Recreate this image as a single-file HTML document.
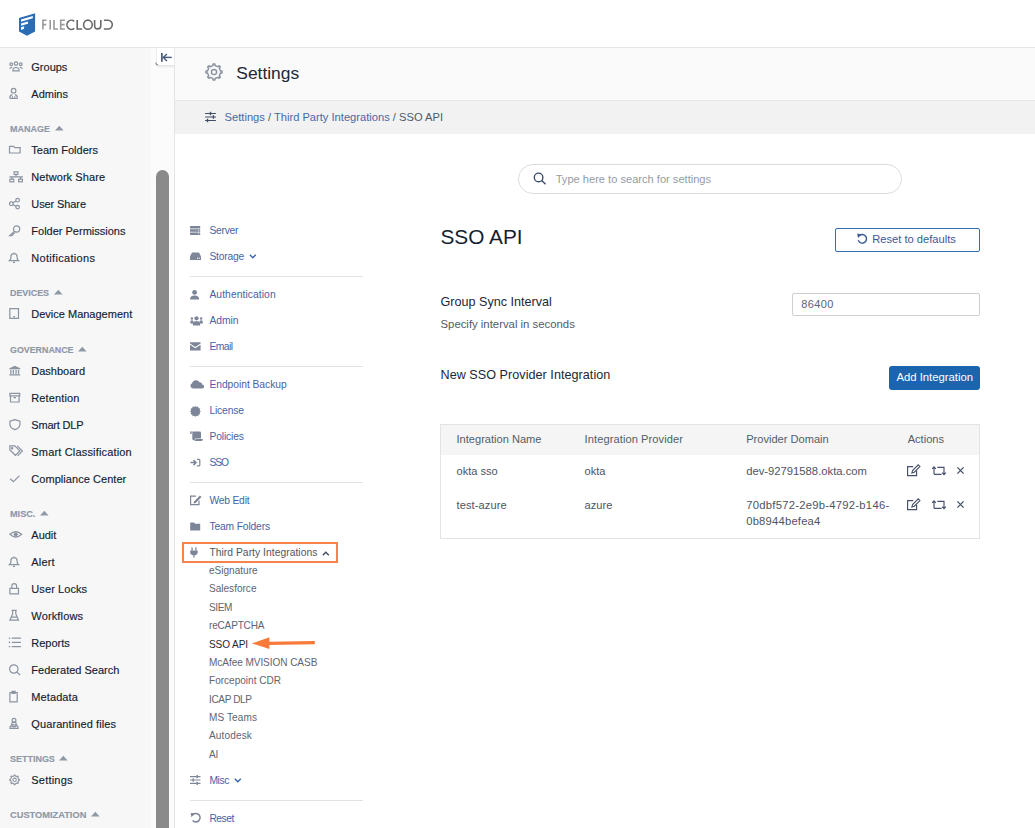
<!DOCTYPE html>
<html><head><meta charset="utf-8"><style>
html,body{margin:0;padding:0;width:1035px;height:828px;overflow:hidden;background:#fff;font-family:"Liberation Sans", sans-serif}
.t{position:absolute;white-space:nowrap;line-height:1}
svg{overflow:visible}
</style></head><body>
<div style="position:absolute;left:0px;top:0px;width:1035px;height:47px;background:#fff"></div><div style="position:absolute;left:0px;top:47px;width:1035px;height:1px;background:#e6e6e6"></div><div style="position:absolute;left:0px;top:48px;width:151px;height:780px;background:#f7f7f7"></div><div style="position:absolute;left:151px;top:48px;width:23px;height:780px;background:#fbfbfb"></div><div style="position:absolute;left:174px;top:48px;width:1px;height:780px;background:#e4e4e4"></div><div style="position:absolute;left:175px;top:48px;width:860px;height:52px;background:#fafafa"></div><div style="position:absolute;left:175px;top:100px;width:860px;height:1px;background:#e6e6e6"></div><div style="position:absolute;left:175px;top:101px;width:860px;height:33px;background:#f2f2f2"></div><div style="position:absolute;left:175px;top:134px;width:860px;height:694px;background:#fff"></div><div style="position:absolute;left:156px;top:170px;width:13px;height:700px;background:#8a8a8a;border-radius:6.5px"></div><svg style="position:absolute;left:17px;top:11px;" width="22" height="28" viewBox="0 0 22 28">
<path d="M2 7 L18.1 2.2 L18.1 20.4 L10 24.8 L2 20.4 Z" fill="#2b6db4"/>
<path d="M4 8.6 L15.8 5 L15.8 7.2 L4 10.8 Z" fill="#fff"/>
<path d="M4 12.6 L11 10.5 L11 12.7 L4 14.8 Z" fill="#fff"/>
<path d="M4 16.3 L7.1 15.2 L7.1 17.8 L4 19 Z" fill="#fff"/>
</svg><svg style="position:absolute;left:38px;top:14px;" width="80" height="20" viewBox="0 0 80 20">
<g fill="none" stroke-width="1.6">
<g stroke="#9a9a9a">
<path d="M4.9 15.6 V6.2 H8.6 M4.9 10.6 H8.2"/>
<path d="M12.2 6 V15.6"/>
<path d="M16 6 V15 H20"/>
<path d="M26.9 6.2 H22.7 V15 H26.9 M22.7 10.6 H26.6"/>
</g>
<g stroke="#6a6a6a">
<path d="M36.2 7.3 A4.4 4.6 0 1 0 36.2 14.3"/>
<path d="M39.2 6 V15 H44.2"/>
<ellipse cx="49.9" cy="10.7" rx="4.3" ry="4.6"/>
<path d="M56.6 6 V11.5 A3.1 3.4 0 0 0 62.8 11.5 V6"/>
<path d="M65.9 6.2 H70 A4.3 4.4 0 0 1 70 15 H65.9"/>
</g>
</g>
</svg><div style="position:absolute;left:156px;top:48px;width:19px;height:18px;box-sizing:border-box;background:#fff;border-left:1px solid #ececec;border-right:1px solid #e9e9e9;border-bottom:1px solid #e6e6e6;box-shadow:0 2px 2px -1px rgba(0,0,0,0.08)"></div><svg style="position:absolute;left:154px;top:61px;" width="6" height="6" viewBox="0 0 6 6"><path d="M1.6 1.6 Q1.8 3.6 4.2 4" stroke="#6a6a6a" stroke-width="1.1" fill="none" opacity="0.75"/></svg><svg style="position:absolute;left:158px;top:50px;" width="16" height="14" viewBox="0 0 16 14"><g fill="none" stroke="#46587a"><path d="M3.9 2.9 V11.8" stroke-width="1.7"/><path d="M5.2 7.4 H13.7" stroke-width="1.4"/><path d="M8.9 3.9 L5.4 7.4 L8.9 10.9" stroke-width="1.4"/></g></svg><div class="t" style="left:31.3px;top:62.00px;font-size:11px;color:#131c33;font-weight:400;-webkit-text-stroke:0.15px #131c33;letter-spacing:0px">Groups</div><svg style="position:absolute;left:8px;top:60.2px;" width="16" height="14" viewBox="0 0 16 14"><g fill="none" stroke="#8b94a1" stroke-width="1.2"><circle cx="3.2" cy="4.2" r="1.35"/><circle cx="8" cy="3.6" r="1.75"/><circle cx="12.8" cy="4.2" r="1.35"/><path d="M1.6 8.7 Q2.4 7.3 4.3 7.3 M14.5 8.7 Q13.7 7.3 11.8 7.3"/><path d="M4.9 10.9 Q4.9 7.5 8 7.5 Q11.1 7.5 11.1 10.9 Z"/></g></svg><div class="t" style="left:31.3px;top:89.00px;font-size:11px;color:#131c33;font-weight:400;-webkit-text-stroke:0.15px #131c33;letter-spacing:0px">Admins</div><svg style="position:absolute;left:8px;top:87.2px;" width="16" height="14" viewBox="0 0 16 14"><g fill="none" stroke="#8b94a1" stroke-width="1.2"><circle cx="5.6" cy="3.7" r="2.3"/><path d="M1.8 11.4 Q1.8 7.9 4.3 7.6 M9.4 11.4 Q9.4 7.9 6.9 7.6 M1.8 11.5 H9.4 M4.4 11.4 V9.2 M6.8 11.4 V9.2"/></g></svg><div class="t" style="left:9.5px;top:124px;font-size:9.7px;color:#8f98a6;font-weight:700;transform:scaleX(0.926);transform-origin:0 0;-webkit-text-stroke:0.15px #8f98a6">MANAGE</div><svg style="position:absolute;left:54.5px;top:125px;" width="9" height="6" viewBox="0 0 9 6"><path d="M0 5.5 L4.3 0.7 L8.6 5.5 Z" fill="#8f98a6"/></svg><div class="t" style="left:31.3px;top:145.00px;font-size:11px;color:#131c33;font-weight:400;-webkit-text-stroke:0.15px #131c33;letter-spacing:0px">Team Folders</div><svg style="position:absolute;left:8px;top:143.2px;" width="16" height="14" viewBox="0 0 16 14"><g fill="none" stroke="#8b94a1" stroke-width="1.2"><path d="M1.5 3.4 H5.6 L6.8 4.6 H12.1 V10 H1.5 Z"/></g></svg><div class="t" style="left:31.3px;top:172.00px;font-size:11px;color:#131c33;font-weight:400;-webkit-text-stroke:0.15px #131c33;letter-spacing:0.08px">Network Share</div><svg style="position:absolute;left:8px;top:170.2px;" width="16" height="14" viewBox="0 0 16 14"><g fill="none" stroke="#8b94a1" stroke-width="1.2"><rect x="6.1" y="1.8" width="3.8" height="2.6"/><rect x="1.9" y="9.2" width="3.8" height="2.6"/><rect x="10.6" y="9.2" width="3.8" height="2.6"/><path d="M8 4.4 V6.8 M1.4 6.8 H15 M3.8 6.8 V9.2 M12.5 6.8 V9.2"/></g></svg><div class="t" style="left:31.3px;top:199.00px;font-size:11px;color:#131c33;font-weight:400;-webkit-text-stroke:0.15px #131c33;letter-spacing:-0.1px">User Share</div><svg style="position:absolute;left:8px;top:197.2px;" width="16" height="14" viewBox="0 0 16 14"><g fill="none" stroke="#8b94a1" stroke-width="1.2"><circle cx="3.3" cy="6.7" r="1.8"/><circle cx="9.6" cy="3.2" r="1.8"/><circle cx="9.6" cy="10.1" r="1.8"/><path d="M4.9 5.8 L8 4.1 M4.9 7.6 L8 9.2"/></g></svg><div class="t" style="left:31.3px;top:226.00px;font-size:11px;color:#131c33;font-weight:400;-webkit-text-stroke:0.15px #131c33;letter-spacing:0px">Folder Permissions</div><svg style="position:absolute;left:8px;top:224.2px;" width="16" height="14" viewBox="0 0 16 14"><g fill="none" stroke="#8b94a1" stroke-width="1.2"><path d="M6.1 7.6 L1.6 11.6 H3.9 L4.6 10.9 V9.9 H5.6 L6.9 8.6"/><circle cx="8.6" cy="5" r="3.1"/></g></svg><div class="t" style="left:31.3px;top:253.00px;font-size:11px;color:#131c33;font-weight:400;-webkit-text-stroke:0.15px #131c33;letter-spacing:0.31px">Notifications</div><svg style="position:absolute;left:8px;top:251.2px;" width="16" height="14" viewBox="0 0 16 14"><g fill="none" stroke="#8b94a1" stroke-width="1.2"><path d="M1.6 9.6 Q2.9 8.6 2.9 6.6 V5.7 A3.1 3.1 0 0 1 9.1 5.7 V6.6 Q9.1 8.6 10.4 9.6 Z M5 11.3 H7 M6 1.5 V2.5"/></g></svg><div class="t" style="left:9.5px;top:288px;font-size:9.7px;color:#8f98a6;font-weight:700;transform:scaleX(0.918);transform-origin:0 0;-webkit-text-stroke:0.15px #8f98a6">DEVICES</div><svg style="position:absolute;left:53.7px;top:289px;" width="9" height="6" viewBox="0 0 9 6"><path d="M0 5.5 L4.3 0.7 L8.6 5.5 Z" fill="#8f98a6"/></svg><div class="t" style="left:31.3px;top:309.00px;font-size:11px;color:#131c33;font-weight:400;-webkit-text-stroke:0.15px #131c33;letter-spacing:0px">Device Management</div><svg style="position:absolute;left:8px;top:307.2px;" width="16" height="14" viewBox="0 0 16 14"><g fill="none" stroke="#8b94a1" stroke-width="1.2"><path d="M1.8 1.7 H10.5 V11.3 H1.8 Z M5.3 9.7 H7"/></g></svg><div class="t" style="left:9.5px;top:345px;font-size:9.7px;color:#8f98a6;font-weight:700;transform:scaleX(0.915);transform-origin:0 0;-webkit-text-stroke:0.15px #8f98a6">GOVERNANCE</div><svg style="position:absolute;left:78px;top:346px;" width="9" height="6" viewBox="0 0 9 6"><path d="M0 5.5 L4.3 0.7 L8.6 5.5 Z" fill="#8f98a6"/></svg><div class="t" style="left:31.3px;top:366.00px;font-size:11px;color:#131c33;font-weight:400;-webkit-text-stroke:0.15px #131c33;letter-spacing:0px">Dashboard</div><svg style="position:absolute;left:8px;top:364.2px;" width="16" height="14" viewBox="0 0 16 14"><g fill="#8b94a1"><path d="M6.8 1.8 L12.2 4.3 V5.2 H1.4 V4.3 Z"/><rect x="2.2" y="5.8" width="1.3" height="4"/><rect x="4.7" y="5.8" width="1.3" height="4"/><rect x="7.4" y="5.8" width="1.3" height="4"/><rect x="9.9" y="5.8" width="1.3" height="4"/><rect x="1.4" y="10.2" width="10.8" height="1.3"/></g></svg><div class="t" style="left:31.3px;top:393.00px;font-size:11px;color:#131c33;font-weight:400;-webkit-text-stroke:0.15px #131c33;letter-spacing:0.12px">Retention</div><svg style="position:absolute;left:8px;top:391.2px;" width="16" height="14" viewBox="0 0 16 14"><g fill="none" stroke="#8b94a1" stroke-width="1.2"><path d="M1.9 2.3 H11.7 V4.8 H1.9 Z M2.5 4.8 V11 H11.1 V4.8 M5.6 6.7 H8"/></g></svg><div class="t" style="left:31.3px;top:420.00px;font-size:11px;color:#131c33;font-weight:400;-webkit-text-stroke:0.15px #131c33;letter-spacing:-0.2px">Smart DLP</div><svg style="position:absolute;left:8px;top:418.2px;" width="16" height="14" viewBox="0 0 16 14"><g fill="none" stroke="#8b94a1" stroke-width="1.2"><path d="M6.9 1.6 L11.9 3.3 V6.2 Q11.9 10 6.9 11.6 Q1.9 10 1.9 6.2 V3.3 Z"/></g></svg><div class="t" style="left:31.3px;top:447.00px;font-size:11px;color:#131c33;font-weight:400;-webkit-text-stroke:0.15px #131c33;letter-spacing:0.17px">Smart Classification</div><svg style="position:absolute;left:8px;top:445.2px;" width="16" height="14" viewBox="0 0 16 14"><g fill="none" stroke="#8b94a1" stroke-width="1.2"><path d="M1.9 0.9 H6.8 L11.8 5.9 L7.4 10.3 L1.9 4.9 Z M9.2 0.9 L14.4 6.1 L9.6 10.9"/><circle cx="4.2" cy="3.3" r="0.6"/></g></svg><div class="t" style="left:31.3px;top:474.00px;font-size:11px;color:#131c33;font-weight:400;-webkit-text-stroke:0.15px #131c33;letter-spacing:0.05px">Compliance Center</div><svg style="position:absolute;left:8px;top:472.2px;" width="16" height="14" viewBox="0 0 16 14"><g fill="none" stroke="#8b94a1" stroke-width="1.2" stroke-width="1.2"><path d="M2.2 6.8 L5.4 9.6 L11.5 3.6"/></g></svg><div class="t" style="left:9.5px;top:509px;font-size:9.7px;color:#8f98a6;font-weight:700;transform:scaleX(0.944);transform-origin:0 0;-webkit-text-stroke:0.15px #8f98a6">MISC.</div><svg style="position:absolute;left:39.9px;top:510px;" width="9" height="6" viewBox="0 0 9 6"><path d="M0 5.5 L4.3 0.7 L8.6 5.5 Z" fill="#8f98a6"/></svg><div class="t" style="left:31.3px;top:530.00px;font-size:11px;color:#131c33;font-weight:400;-webkit-text-stroke:0.15px #131c33;letter-spacing:0px">Audit</div><svg style="position:absolute;left:8px;top:528.2px;" width="16" height="14" viewBox="0 0 16 14"><g fill="none" stroke="#8b94a1" stroke-width="1.2"><path d="M1.9 6.3 Q7.75 0.9 13.6 6.3 Q7.75 11.7 1.9 6.3 Z"/></g><circle cx="7.75" cy="6.3" r="2" fill="#8b94a1"/></svg><div class="t" style="left:31.3px;top:557.00px;font-size:11px;color:#131c33;font-weight:400;-webkit-text-stroke:0.15px #131c33;letter-spacing:0.15px">Alert</div><svg style="position:absolute;left:8px;top:555.2px;" width="16" height="14" viewBox="0 0 16 14"><g fill="none" stroke="#8b94a1" stroke-width="1.2"><path d="M1.6 9.6 Q2.9 8.6 2.9 6.6 V5.7 A3.1 3.1 0 0 1 9.1 5.7 V6.6 Q9.1 8.6 10.4 9.6 Z M5 11.3 H7 M6 1.5 V2.5"/></g></svg><div class="t" style="left:31.3px;top:584.00px;font-size:11px;color:#131c33;font-weight:400;-webkit-text-stroke:0.15px #131c33;letter-spacing:0.09px">User Locks</div><svg style="position:absolute;left:8px;top:582.2px;" width="16" height="14" viewBox="0 0 16 14"><g fill="none" stroke="#8b94a1" stroke-width="1.2"><path d="M1.9 6.4 H10.5 V11.9 H1.9 Z M3.8 6.4 V4.1 A2.4 2.4 0 0 1 8.6 4.1 V6.4"/></g></svg><div class="t" style="left:31.3px;top:611.00px;font-size:11px;color:#131c33;font-weight:400;-webkit-text-stroke:0.15px #131c33;letter-spacing:0.15px">Workflows</div><svg style="position:absolute;left:8px;top:609.2px;" width="16" height="14" viewBox="0 0 16 14"><g fill="none" stroke="#8b94a1" stroke-width="1.2"><path d="M3.6 1.3 H8.8 M4.6 1.3 V5 L1.9 11.2 H10.5 L7.8 5 V1.3 M3.3 8.2 H9.1"/></g></svg><div class="t" style="left:31.3px;top:638.00px;font-size:11px;color:#131c33;font-weight:400;-webkit-text-stroke:0.15px #131c33;letter-spacing:0px">Reports</div><svg style="position:absolute;left:8px;top:636.2px;" width="16" height="14" viewBox="0 0 16 14"><g><g fill="#8b94a1"><rect x="0.8" y="1.5" width="1.4" height="1.4"/><rect x="0.8" y="5.7" width="1.4" height="1.4"/><rect x="0.8" y="9.9" width="1.4" height="1.4"/></g><g fill="none" stroke="#8b94a1" stroke-width="1.2"><path d="M3.8 2.2 H12.9 M3.8 6.4 H12.9 M3.8 10.6 H12.9"/></g></g></svg><div class="t" style="left:31.3px;top:665.00px;font-size:11px;color:#131c33;font-weight:400;-webkit-text-stroke:0.15px #131c33;letter-spacing:0px">Federated Search</div><svg style="position:absolute;left:8px;top:663.2px;" width="16" height="14" viewBox="0 0 16 14"><g fill="none" stroke="#8b94a1" stroke-width="1.2"><circle cx="5.8" cy="6" r="4.2"/><path d="M8.9 9.1 L12.1 12"/></g></svg><div class="t" style="left:31.3px;top:692.00px;font-size:11px;color:#131c33;font-weight:400;-webkit-text-stroke:0.15px #131c33;letter-spacing:0.1px">Metadata</div><svg style="position:absolute;left:8px;top:690.2px;" width="16" height="14" viewBox="0 0 16 14"><g fill="none" stroke="#8b94a1" stroke-width="1.2"><path d="M1.9 2.5 H9.2 V11.8 H1.9 Z M4 1.3 H7.1 V3.3 H4 Z"/></g></svg><div class="t" style="left:31.3px;top:719.00px;font-size:11px;color:#131c33;font-weight:400;-webkit-text-stroke:0.15px #131c33;letter-spacing:0.1px">Quarantined files</div><svg style="position:absolute;left:8px;top:717.2px;" width="16" height="14" viewBox="0 0 16 14"><g fill="none" stroke="#8b94a1" stroke-width="1.2"><circle cx="6" cy="3.3" r="1.9"/><path d="M4.2 5.4 H7.8 L8.4 7.8 H3.6 Z M1.9 11.4 Q1.9 7.8 6 7.8 Q10.2 7.8 10.2 11.4 Z M3.8 9.6 H8.2"/></g></svg><div class="t" style="left:9.5px;top:754px;font-size:9.7px;color:#8f98a6;font-weight:700;transform:scaleX(0.926);transform-origin:0 0;-webkit-text-stroke:0.15px #8f98a6">SETTINGS</div><svg style="position:absolute;left:59.1px;top:755px;" width="9" height="6" viewBox="0 0 9 6"><path d="M0 5.5 L4.3 0.7 L8.6 5.5 Z" fill="#8f98a6"/></svg><div class="t" style="left:31.3px;top:775.00px;font-size:11px;color:#131c33;font-weight:400;-webkit-text-stroke:0.15px #131c33;letter-spacing:0.2px">Settings</div><svg style="position:absolute;left:8px;top:773.2px;" width="16" height="14" viewBox="0 0 16 14"><g fill="none" stroke="#8b94a1" stroke-width="1.05"><circle cx="6.6" cy="6.8" r="1.7"/><path d="M10.47 6.03 L10.50 6.15 L11.42 6.23 L11.42 7.37 L10.50 7.45 L9.88 8.99 L9.81 9.10 L10.41 9.80 L9.60 10.61 L8.90 10.01 L7.37 10.67 L7.25 10.70 L7.17 11.62 L6.03 11.62 L5.95 10.70 L4.41 10.08 L4.30 10.01 L3.60 10.61 L2.79 9.80 L3.39 9.10 L2.73 7.57 L2.70 7.45 L1.78 7.37 L1.78 6.23 L2.70 6.15 L3.32 4.61 L3.39 4.50 L2.79 3.80 L3.60 2.99 L4.30 3.59 L5.83 2.93 L5.95 2.90 L6.03 1.98 L7.17 1.98 L7.25 2.90 L8.79 3.52 L8.90 3.59 L9.60 2.99 L10.41 3.80 L9.81 4.50 Z" stroke-linejoin="round"/></g></svg><div class="t" style="left:9.5px;top:810px;font-size:9.7px;color:#8f98a6;font-weight:700;transform:scaleX(0.956);transform-origin:0 0;-webkit-text-stroke:0.15px #8f98a6">CUSTOMIZATION</div><svg style="position:absolute;left:91px;top:811px;" width="9" height="6" viewBox="0 0 9 6"><path d="M0 5.5 L4.3 0.7 L8.6 5.5 Z" fill="#8f98a6"/></svg><svg style="position:absolute;left:204px;top:62px;" width="20" height="20" viewBox="0 0 20 20"><g fill="none" stroke="#8a929f" stroke-width="1.45"><circle cx="10" cy="10" r="2.6"/><path d="M16.38 8.73 L16.41 8.93 L18.04 9.05 L18.04 10.95 L16.41 11.07 L15.40 13.61 L15.29 13.78 L16.36 15.01 L15.01 16.36 L13.78 15.29 L11.27 16.38 L11.07 16.41 L10.95 18.04 L9.05 18.04 L8.93 16.41 L6.39 15.40 L6.22 15.29 L4.99 16.36 L3.64 15.01 L4.71 13.78 L3.62 11.27 L3.59 11.07 L1.96 10.95 L1.96 9.05 L3.59 8.93 L4.60 6.39 L4.71 6.22 L3.64 4.99 L4.99 3.64 L6.22 4.71 L8.73 3.62 L8.93 3.59 L9.05 1.96 L10.95 1.96 L11.07 3.59 L13.61 4.60 L13.78 4.71 L15.01 3.64 L16.36 4.99 L15.29 6.22 Z" stroke-linejoin="round"/></g></svg><div class="t" style="left:236.3px;top:64.90px;font-size:17.4px;color:#1d2738;font-weight:400;">Settings</div><svg style="position:absolute;left:203px;top:110px;" width="15" height="14" viewBox="0 0 15 14"><g fill="none" stroke="#414d64" stroke-width="1.05"><path d="M2.1 3.5 H12.9 M2.1 7 H12.9 M2.1 10.5 H12.9"/></g><g fill="#414d64"><rect x="6.8" y="1.8" width="1.4" height="3.4"/><rect x="9.7" y="5.3" width="1.4" height="3.4"/><rect x="3.8" y="8.8" width="1.4" height="3.4"/></g></svg><div class="t" style="left:224.6px;top:111.60px;font-size:11.15px;color:#505866;font-weight:400;"><span style="color:#4869a6">Settings</span> / <span style="color:#4869a6">Third Party Integrations</span> / SSO API</div><div class="t" style="left:209.4px;top:226.00px;font-size:10.3px;color:#4862a3;font-weight:400;letter-spacing:-0.26px">Server</div><svg style="position:absolute;left:189.8px;top:225.6px;" width="12" height="11" viewBox="0 0 12 11"><g fill="#7d8698"><rect x="0" y="0" width="10.2" height="2.6" rx="0.5"/><rect x="0" y="3.2" width="10.2" height="2.6" rx="0.5"/><rect x="0" y="6.4" width="10.2" height="2.6" rx="0.5"/></g><g fill="#fff"><circle cx="8.6" cy="4.5" r="0.5"/><circle cx="8.6" cy="7.7" r="0.5"/></g></svg><div class="t" style="left:209.4px;top:252.00px;font-size:10.3px;color:#4862a3;font-weight:400;letter-spacing:-0.2px">Storage</div><svg style="position:absolute;left:189.8px;top:251.6px;" width="12" height="11" viewBox="0 0 12 11"><path d="M2 0.5 H9 L11 4.5 V8 H0 V4.5 Z" fill="#7d8698"/><g fill="#fff"><circle cx="7.6" cy="6.2" r="0.6"/><circle cx="9.3" cy="6.2" r="0.6"/></g></svg><svg style="position:absolute;left:249px;top:254.2px;" width="8" height="5" viewBox="0 0 8 5"><path d="M0.8 0.8 L3.8 3.8 L6.8 0.8" fill="none" stroke="#3662ac" stroke-width="1.3"/></svg><div style="position:absolute;left:190px;top:276px;width:173px;height:1px;background:#e2e2e2"></div><div class="t" style="left:209.4px;top:290.00px;font-size:10.3px;color:#4862a3;font-weight:400;letter-spacing:0.077px">Authentication</div><svg style="position:absolute;left:189.8px;top:289.6px;" width="12" height="11" viewBox="0 0 12 11"><g fill="#7d8698"><circle cx="4.6" cy="2.4" r="2.4"/><path d="M0 9.5 Q0 5.6 4.6 5.6 Q9.2 5.6 9.2 9.5 Z"/></g></svg><div class="t" style="left:209.4px;top:316.00px;font-size:10.3px;color:#4862a3;font-weight:400;letter-spacing:0px">Admin</div><svg style="position:absolute;left:189.8px;top:315.6px;" width="12" height="11" viewBox="0 0 12 11"><g fill="#7d8698"><circle cx="6.5" cy="2.3" r="2.1"/><circle cx="1.9" cy="2.4" r="1.25"/><circle cx="11.1" cy="2.4" r="1.25"/><path d="M0.3 7.4 V5.8 Q0.3 4.3 1.8 4.3 Q3 4.3 3.4 5 L3.2 7.4 Z"/><path d="M12.8 7.4 V5.8 Q12.8 4.3 11.3 4.3 Q10.1 4.3 9.7 5 L9.9 7.4 Z"/><path d="M2.9 9.4 V7.2 Q2.9 5.3 5 5.3 H8 Q10.1 5.3 10.1 7.2 V9.4 Z"/></g></svg><div class="t" style="left:209.4px;top:342.00px;font-size:10.3px;color:#4862a3;font-weight:400;letter-spacing:-0.5px">Email</div><svg style="position:absolute;left:189.8px;top:341.6px;" width="12" height="11" viewBox="0 0 12 11"><g fill="#7d8698"><path d="M0 0.3 H10.6 V1.6 L5.3 5 L0 1.6 Z"/><path d="M0 2.8 L5.3 6.3 L10.6 2.8 V8.4 H0 Z"/></g></svg><div style="position:absolute;left:190px;top:366px;width:173px;height:1px;background:#e2e2e2"></div><div class="t" style="left:209.4px;top:380.00px;font-size:10.3px;color:#4862a3;font-weight:400;letter-spacing:-0.04px">Endpoint Backup</div><svg style="position:absolute;left:189.8px;top:379.6px;" width="12" height="11" viewBox="0 0 12 11"><path d="M2.8 9 A2.7 2.7 0 0 1 1.9 3.9 A3.7 3.7 0 0 1 8.8 2.8 A2.4 2.4 0 0 1 11.2 5.2 A1.9 1.9 0 0 1 11.2 9 Z" fill="#7d8698" transform="translate(0 -0.6) scale(1.08 1.0)"/></svg><div class="t" style="left:209.4px;top:406.00px;font-size:10.3px;color:#4862a3;font-weight:400;letter-spacing:-0.15px">License</div><svg style="position:absolute;left:189.8px;top:405.6px;" width="12" height="11" viewBox="0 0 12 11"><path d="M5 0 L6.2 1.1 L7.8 0.6 L8.2 2.2 L9.8 2.6 L9.3 4.2 L10.4 5.4 L9.3 6.6 L9.8 8.2 L8.2 8.6 L7.8 10.2 L6.2 9.7 L5 10.8 L3.8 9.7 L2.2 10.2 L1.8 8.6 L0.2 8.2 L0.7 6.6 L-0.4 5.4 L0.7 4.2 L0.2 2.6 L1.8 2.2 L2.2 0.6 L3.8 1.1 Z" fill="#7d8698" transform="translate(0.4 0)"/></svg><div class="t" style="left:209.4px;top:432.00px;font-size:10.3px;color:#4862a3;font-weight:400;letter-spacing:-0.13px">Policies</div><svg style="position:absolute;left:189.8px;top:431.6px;" width="12" height="11" viewBox="0 0 12 11"><g fill="#7d8698"><rect x="0.2" y="-0.6" width="1.5" height="2.5"/><path d="M2.3 -0.6 H9.8 Q11 -0.6 11 0.8 V6.6 H5.4 L4.2 8.4 Q2.3 8.4 2.3 6.8 Z"/><path d="M5.6 7 H12.9 Q12.9 9.1 11.6 9.1 H4.6 Z"/></g></svg><div class="t" style="left:209.4px;top:458.00px;font-size:10.3px;color:#4862a3;font-weight:400;letter-spacing:-1.1px">SSO</div><svg style="position:absolute;left:189.8px;top:457.6px;" width="12" height="11" viewBox="0 0 12 11"><g fill="none" stroke="#7d8698"><path d="M0.4 4.6 H6 M3.5 2.1 L6 4.6 L3.5 7.1" stroke-width="1.5"/><path d="M6.9 1.4 H9.1 Q9.8 1.4 9.8 2.1 V7.1 Q9.8 7.8 9.1 7.8 H6.9" stroke-width="1.2"/></g></svg><div style="position:absolute;left:190px;top:482px;width:173px;height:1px;background:#e2e2e2"></div><div class="t" style="left:209.4px;top:496.00px;font-size:10.3px;color:#4862a3;font-weight:400;letter-spacing:-0.2px">Web Edit</div><svg style="position:absolute;left:189.8px;top:495.6px;" width="12" height="11" viewBox="0 0 12 11"><g fill="none" stroke="#7d8698" stroke-width="1.2"><path d="M6 0.2 H0.6 V8.6 H9 V4.6"/></g><path d="M9.9 -0.6 L11.5 1 L5.6 6.9 L3.5 7.5 L4.1 5.4 Z" fill="#7d8698"/></svg><div class="t" style="left:209.4px;top:522.00px;font-size:10.3px;color:#4862a3;font-weight:400;letter-spacing:-0.15px">Team Folders</div><svg style="position:absolute;left:189.8px;top:521.6px;" width="12" height="11" viewBox="0 0 12 11"><path d="M0.2 0.6 H4 L5.1 1.8 H10.2 V8.4 H0.2 Z" fill="#7d8698"/></svg><div class="t" style="left:209.4px;top:548.00px;font-size:10.3px;color:#4f5664;font-weight:400;letter-spacing:0.04px">Third Party Integrations</div><svg style="position:absolute;left:189.8px;top:547.6px;" width="12" height="11" viewBox="0 0 12 11"><g fill="#7d8698"><rect x="1.4" y="-0.6" width="1.3" height="3.2"/><rect x="5.2" y="-0.6" width="1.3" height="3.2"/><path d="M0.2 2.4 H7.7 V4.6 Q7.7 6.9 4.6 7.3 V9.4 H3.3 V7.3 Q0.2 6.9 0.2 4.6 Z"/></g></svg><svg style="position:absolute;left:321.5px;top:550.5px;" width="8" height="5" viewBox="0 0 8 5"><path d="M0.8 4.2 L3.8 1.2 L6.8 4.2" fill="none" stroke="#3d4a60" stroke-width="1.3"/></svg><div style="position:absolute;left:182px;top:542px;width:152px;height:17px;border:2px solid #f7844a;"></div><div class="t" style="left:209px;top:566.00px;font-size:10.05px;color:#5d6572;font-weight:400;letter-spacing:0px">eSignature</div><div class="t" style="left:209px;top:584.00px;font-size:10.05px;color:#5d6572;font-weight:400;letter-spacing:0px">Salesforce</div><div class="t" style="left:209px;top:603.00px;font-size:10.05px;color:#5d6572;font-weight:400;letter-spacing:-0.43px">SIEM</div><div class="t" style="left:209px;top:621.00px;font-size:10.05px;color:#5d6572;font-weight:400;letter-spacing:-0.19px">reCAPTCHA</div><div class="t" style="left:209px;top:640.00px;font-size:10.05px;color:#222832;font-weight:400;letter-spacing:-0.1px">SSO API</div><div class="t" style="left:209px;top:658.00px;font-size:10.05px;color:#5d6572;font-weight:400;letter-spacing:-0.06px">McAfee MVISION CASB</div><div class="t" style="left:209px;top:676.00px;font-size:10.05px;color:#5d6572;font-weight:400;letter-spacing:0px">Forcepoint CDR</div><div class="t" style="left:209px;top:695.00px;font-size:10.05px;color:#5d6572;font-weight:400;letter-spacing:-0.37px">ICAP DLP</div><div class="t" style="left:209px;top:713.00px;font-size:10.05px;color:#5d6572;font-weight:400;letter-spacing:0.1px">MS Teams</div><div class="t" style="left:209px;top:731.00px;font-size:10.05px;color:#5d6572;font-weight:400;letter-spacing:0.14px">Autodesk</div><div class="t" style="left:209px;top:750.00px;font-size:10.05px;color:#5d6572;font-weight:400;letter-spacing:-0.3px">AI</div><svg style="position:absolute;left:250px;top:636px;" width="68" height="14" viewBox="0 0 68 14"><path d="M64.8 6.6 L18 7.3" stroke="#f77a3b" stroke-width="3.3" fill="none"/><path d="M1.8 7.4 L19.4 1.2 L19.4 13 Z" fill="#f77a3b"/></svg><div class="t" style="left:209.4px;top:776.00px;font-size:10.3px;color:#4862a3;font-weight:400;letter-spacing:-0.4px">Misc</div><svg style="position:absolute;left:189.8px;top:775.1px;" width="12" height="11" viewBox="0 0 12 11"><g fill="none" stroke="#7d8698" stroke-width="1.1"><path d="M0 1.6 H10.5 M0 5 H10.5 M0 8.4 H10.5"/></g><g fill="#7d8698"><rect x="6.5" y="0" width="1.4" height="3.2"/><rect x="2.5" y="3.4" width="1.4" height="3.2"/><rect x="6.5" y="6.8" width="1.4" height="3.2"/></g></svg><svg style="position:absolute;left:233.5px;top:778.2px;" width="8" height="5" viewBox="0 0 8 5"><path d="M0.8 0.8 L3.8 3.8 L6.8 0.8" fill="none" stroke="#3662ac" stroke-width="1.3"/></svg><div style="position:absolute;left:190px;top:800px;width:173px;height:1px;background:#e2e2e2"></div><div class="t" style="left:209.4px;top:814.00px;font-size:10.3px;color:#4862a3;font-weight:400;letter-spacing:-0.5px">Reset</div><svg style="position:absolute;left:189.8px;top:812.1px;" width="12" height="11" viewBox="0 0 12 11"><g fill="none" stroke="#7d8698" stroke-width="1.5"><path d="M2.2 3.3 A4.3 4.3 0 1 1 2.6 8.6"/></g><path d="M0 0.6 L4.4 0.9 L0.8 4.8 Z" fill="#7d8698" transform="translate(0.6 0.4)"/></svg><div style="position:absolute;left:518px;top:164px;width:384px;height:30px;box-sizing:border-box;border:1px solid #dcdcdc;border-radius:15px;background:#fff"></div><svg style="position:absolute;left:533px;top:172px;" width="14" height="13" viewBox="0 0 14 13"><g fill="none" stroke="#3c4b69" stroke-width="1.35"><circle cx="5.6" cy="5.4" r="4.3"/><path d="M8.7 8.5 L12.6 12.3"/></g></svg><div class="t" style="left:555.7px;top:174.00px;font-size:11.1px;color:#959ba6;font-weight:400;">Type here to search for settings</div><div class="t" style="left:440.5px;top:227.00px;font-size:20.8px;color:#151e30;font-weight:400;">SSO API</div><div style="position:absolute;left:835px;top:228px;width:145px;height:24px;box-sizing:border-box;border:1px solid #2f6db0;border-radius:2px;background:#fff"></div><svg style="position:absolute;left:856px;top:233px;" width="13" height="12" viewBox="0 0 13 12"><g fill="none" stroke="#3b5a95" stroke-width="1.4"><path d="M3.3 2.6 A4.3 4.3 0 1 1 2.2 7.3"/></g><path d="M1.2 0.5 L5.6 1.6 L2 5 Z" fill="#3b5a95"/></svg><div class="t" style="left:872.2px;top:234.00px;font-size:11.15px;color:#3b5a95;font-weight:400;">Reset to defaults</div><div class="t" style="left:440.5px;top:296.00px;font-size:12.6px;color:#1e2638;font-weight:400;">Group Sync Interval</div><div class="t" style="left:440.5px;top:319.00px;font-size:11.35px;color:#525a69;font-weight:400;">Specify interval in seconds</div><div style="position:absolute;left:792px;top:293px;width:188px;height:23px;box-sizing:border-box;border:1px solid #cfcfcf;border-radius:2px;background:#fff"></div><div class="t" style="left:801.3px;top:299.00px;font-size:11px;color:#5c6370;font-weight:400;letter-spacing:0.35px">86400</div><div class="t" style="left:440.5px;top:369.00px;font-size:12.6px;color:#1e2638;font-weight:400;letter-spacing:0.04px">New SSO Provider Integration</div><div style="position:absolute;left:889px;top:366px;width:91px;height:24px;background:#1b65ae;border-radius:3px"></div><div class="t" style="left:896.4px;top:372.00px;font-size:11.3px;color:#ffffff;font-weight:400;">Add Integration</div><div style="position:absolute;left:440px;top:424px;width:540px;height:115px;box-sizing:border-box;border:1px solid #e3e3e3;background:#fff"></div><div style="position:absolute;left:441px;top:425px;width:538px;height:30px;background:#f5f5f5"></div><div class="t" style="left:456.5px;top:434.00px;font-size:11.08px;color:#545c6a;font-weight:400;">Integration Name</div><div class="t" style="left:584.6px;top:434.00px;font-size:11.08px;color:#545c6a;font-weight:400;letter-spacing:0.09px">Integration Provider</div><div class="t" style="left:746.2px;top:434.00px;font-size:11.08px;color:#545c6a;font-weight:400;">Provider Domain</div><div class="t" style="left:907.7px;top:434.00px;font-size:11.08px;color:#545c6a;font-weight:400;">Actions</div><div class="t" style="left:456.5px;top:466.00px;font-size:11.08px;color:#4d5462;font-weight:400;">okta sso</div><div class="t" style="left:584.6px;top:466.00px;font-size:11.08px;color:#4d5462;font-weight:400;">okta</div><div class="t" style="left:746.2px;top:466.00px;font-size:11.25px;color:#4d5462;font-weight:400;">dev-92791588.okta.com</div><div class="t" style="left:456.5px;top:500.00px;font-size:11.08px;color:#4d5462;font-weight:400;letter-spacing:0.1px">test-azure</div><div class="t" style="left:584.6px;top:500.00px;font-size:11.08px;color:#4d5462;font-weight:400;">azure</div><div class="t" style="left:746.2px;top:500.00px;font-size:11.25px;color:#4d5462;font-weight:400;letter-spacing:0.26px">70dbf572-2e9b-4792-b146-</div><div class="t" style="left:746.2px;top:516.00px;font-size:11.25px;color:#4d5462;font-weight:400;letter-spacing:0.2px">0b8944befea4</div><svg style="position:absolute;left:906px;top:464px;" width="15" height="13" viewBox="0 0 15 13"><g fill="none" stroke="#45506a" stroke-width="1.15"><path d="M7.2 2.6 H1.6 V11.6 H10.6 V6.8"/><path d="M12.2 0.9 L13.9 2.6 L8.3 8.2 L5.9 8.9 L6.6 6.5 Z"/></g></svg><svg style="position:absolute;left:931px;top:465px;" width="16" height="11" viewBox="0 0 16 11"><g fill="none" stroke="#45506a" stroke-width="1.15"><path d="M3 9.3 V1.8 M1.2 3.8 L3 1.8 L4.8 3.8 M3 9.3 H10.6 M6.3 2.4 H13 V9.4 M11.2 7.6 L13 9.6 L14.8 7.6"/></g></svg><svg style="position:absolute;left:956px;top:466px;" width="9" height="9" viewBox="0 0 9 9"><g fill="none" stroke="#45506a" stroke-width="1.3"><path d="M1.4 1.4 L7.6 7.6 M7.6 1.4 L1.4 7.6"/></g></svg><svg style="position:absolute;left:906px;top:498px;" width="15" height="13" viewBox="0 0 15 13"><g fill="none" stroke="#45506a" stroke-width="1.15"><path d="M7.2 2.6 H1.6 V11.6 H10.6 V6.8"/><path d="M12.2 0.9 L13.9 2.6 L8.3 8.2 L5.9 8.9 L6.6 6.5 Z"/></g></svg><svg style="position:absolute;left:931px;top:499px;" width="16" height="11" viewBox="0 0 16 11"><g fill="none" stroke="#45506a" stroke-width="1.15"><path d="M3 9.3 V1.8 M1.2 3.8 L3 1.8 L4.8 3.8 M3 9.3 H10.6 M6.3 2.4 H13 V9.4 M11.2 7.6 L13 9.6 L14.8 7.6"/></g></svg><svg style="position:absolute;left:956px;top:500px;" width="9" height="9" viewBox="0 0 9 9"><g fill="none" stroke="#45506a" stroke-width="1.3"><path d="M1.4 1.4 L7.6 7.6 M7.6 1.4 L1.4 7.6"/></g></svg>
</body></html>
